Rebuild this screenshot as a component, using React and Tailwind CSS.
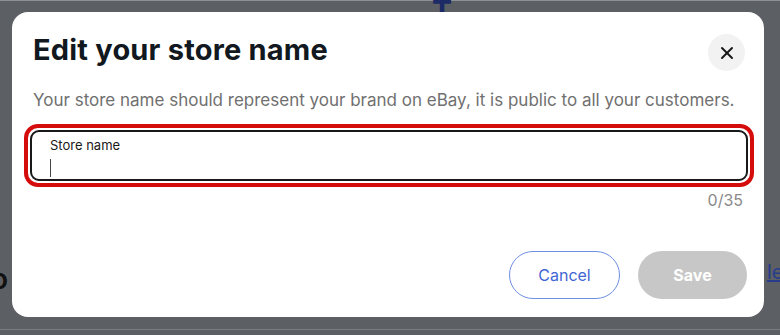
import React from 'react';
import { X } from 'lucide-react';

// Edit store name dialog over a dimmed page

const App = () => {
  return (
    <div
      className="relative w-[780px] h-[335px] overflow-hidden bg-[#5c5f63]"
      style={{ fontFamily: 'Inter, "Noto Sans", sans-serif' }}
    >
      {/* page content peeking around the dialog */}
      <div className="absolute left-0 top-0 w-full h-px bg-[#8d9093]" />
      <div className="absolute left-0 top-[329px] w-full h-px bg-[#7a7d80]" />
      <div className="absolute left-[432px] top-[-4px] text-[30px] leading-[30px] font-bold text-[#1c2a66]">T</div>
      <div className="absolute left-[-9px] top-[264px] text-[28px] leading-[30px] font-semibold text-[#111]">o</div>
      <div className="absolute left-[767px] top-[259px] text-[20px] leading-[26px] text-[#283c8c] underline">le</div>

      {/* dialog */}
      <div className="relative ml-[12px] pt-[12px]">
        <div className="w-[752px] h-[305px] rounded-[16px] bg-white pl-[21px] pr-[19px] pt-[20px]">
          <div className="flex items-start justify-between">
            <h2 className="text-[29px] leading-[36px] font-bold text-[#111820] tracking-[0.2px]">
              Edit your store name
            </h2>
            <button className="mt-[2px] w-[37px] h-[37px] rounded-full bg-[#f2f2f2] flex items-center justify-center text-[#191919]">
              <X size={20} strokeWidth={2.4} />
            </button>
          </div>

          <p className="mt-[19px] text-[17px] leading-[21px] text-[#707070]">
            Your store name should represent your brand on eBay, it is public to all your customers.
          </p>

          {/* focused input */}
          <div className="mt-[13px] ml-[-9px] w-[730px] rounded-[14px] border-[4px] border-[#d50c0c] p-[2px]">
            <div className="h-[51px] rounded-[9px] border-2 border-[#191919] pl-[18px] pt-[5px]">
              <div className="text-[13px] leading-[16px] text-[#191919]">Store name</div>
              <div className="mt-[6px] w-px h-[18px] bg-[#444]" />
            </div>
          </div>
          <div className="mt-[3px] pr-[2px] text-right text-[16px] leading-[20px] text-[#8a8a8a]">0/35</div>

          <div className="mt-[41px] flex justify-end gap-[18px]">
            <button className="w-[111px] h-[48px] rounded-full border border-[#6f8fe3] text-[16px] text-[#3f66d4]">
              Cancel
            </button>
            <button className="w-[109px] h-[48px] rounded-full bg-[#c7c7c7] text-[16px] font-bold text-white mr-[-2px]">
              Save
            </button>
          </div>
        </div>
      </div>
    </div>
  );
};

export default App;
